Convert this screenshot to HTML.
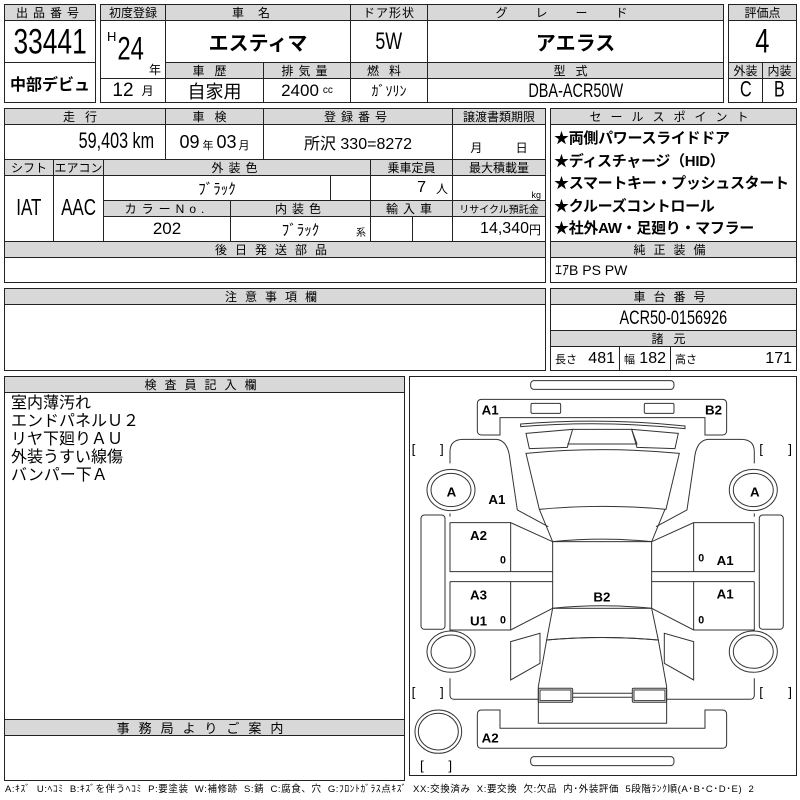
<!DOCTYPE html>
<html><head><meta charset="utf-8"><style>
*{margin:0;padding:0;box-sizing:border-box}
body{width:800px;height:800px;background:#fff;position:relative;overflow:hidden;font-family:"Liberation Sans","Noto Sans CJK JP",sans-serif;color:#000}
.c{position:absolute;border:1px solid #222;display:flex;align-items:center;justify-content:center;white-space:nowrap;font-size:17px}
.h{background:#d8d8d8;font-size:12px;letter-spacing:5px}
.b{font-weight:bold}
.l{justify-content:flex-start;padding-left:4px}
.r{justify-content:flex-end;padding-right:4px}
.n{display:inline-block;transform:scale(0.85,1.15)}
</style></head><body>
<div class="c h" style="left:4px;top:4px;width:92px;height:17px">出品番号</div>
<div class="c" style="left:4px;top:20px;width:92px;height:43px;font-size:31px"><span class="n">33441</span></div>
<div class="c b" style="left:4px;top:62px;width:92px;height:41px;font-size:16px">中部デビュ</div>
<div class="c h" style="left:100px;top:4px;width:66px;height:17px;letter-spacing:0">初度登録</div>
<div class="c h" style="left:165px;top:4px;width:186px;height:17px;letter-spacing:14px">車名</div>
<div class="c h" style="left:350px;top:4px;width:78px;height:17px;letter-spacing:1px">ドア形状</div>
<div class="c h" style="left:427px;top:4px;width:297px;height:17px;letter-spacing:28px">グレード</div>
<div class="c" style="left:100px;top:20px;width:66px;height:59px"><span style="position:absolute;left:6px;top:8px;font-size:13px">H</span><span class="n" style="position:absolute;left:14px;top:12px;font-size:28px">24</span><span style="position:absolute;right:4px;bottom:0;font-size:12px">年</span></div>
<div class="c" style="left:100px;top:78px;width:66px;height:25px;font-size:19px">12 <span style="font-size:12px;margin-left:8px">月</span></div>
<div class="c b" style="left:165px;top:20px;width:186px;height:43px;font-size:20px">エスティマ</div>
<div class="c" style="left:350px;top:20px;width:78px;height:43px;font-size:21px"><span class="n">5W</span></div>
<div class="c b" style="left:427px;top:20px;width:297px;height:43px;font-size:20px">アエラス</div>
<div class="c h" style="left:165px;top:62px;width:99px;height:17px;letter-spacing:10px">車歴</div>
<div class="c h" style="left:263px;top:62px;width:88px;height:17px">排気量</div>
<div class="c h" style="left:350px;top:62px;width:78px;height:17px;letter-spacing:10px">燃料</div>
<div class="c h" style="left:427px;top:62px;width:297px;height:17px;letter-spacing:10px">型式</div>
<div class="c" style="left:165px;top:78px;width:99px;height:25px;font-size:18px">自家用</div>
<div class="c" style="left:263px;top:78px;width:88px;height:25px;font-size:17px">2400 <span style="font-size:10px;margin-left:4px">cc</span></div>
<div class="c" style="left:350px;top:78px;width:78px;height:25px;font-size:14px">ｶﾞｿﾘﾝ</div>
<div class="c" style="left:427px;top:78px;width:297px;height:25px;font-size:17px"><span class="n">DBA-ACR50W</span></div>
<div class="c h" style="left:728px;top:4px;width:69px;height:17px;letter-spacing:0">評価点</div>
<div class="c" style="left:728px;top:20px;width:69px;height:43px;font-size:30px"><span class="n">4</span></div>
<div class="c h" style="left:728px;top:62px;width:35px;height:17px;letter-spacing:0">外装</div>
<div class="c h" style="left:762px;top:62px;width:35px;height:17px;letter-spacing:0">内装</div>
<div class="c" style="left:728px;top:78px;width:35px;height:25px;font-size:19px"><span class="n">C</span></div>
<div class="c" style="left:762px;top:78px;width:35px;height:25px;font-size:19px"><span class="n">B</span></div>
<div class="c h" style="left:4px;top:108px;width:162px;height:17px;letter-spacing:10px">走行</div>
<div class="c h" style="left:165px;top:108px;width:99px;height:17px;letter-spacing:10px">車検</div>
<div class="c h" style="left:263px;top:108px;width:190px;height:17px">登録番号</div>
<div class="c h" style="left:452px;top:108px;width:94px;height:17px;letter-spacing:0">譲渡書類期限</div>
<div class="c r" style="left:4px;top:124px;width:162px;height:36px;font-size:19px"><span class="n">59,403 km</span></div>
<div class="c" style="left:165px;top:124px;width:99px;height:36px;font-size:18px">09<span style="font-size:11px;margin:6px 3px 0">年</span>03<span style="font-size:11px;margin:6px 0 0 2px">月</span></div>
<div class="c" style="left:263px;top:124px;width:190px;height:36px;font-size:16px">所沢 330=8272</div>
<div class="c" style="left:452px;top:124px;width:94px;height:36px;font-size:12px;align-items:flex-end;padding-bottom:3px;word-spacing:30px">月 日</div>
<div class="c h" style="left:4px;top:159px;width:50px;height:17px;letter-spacing:0">シフト</div>
<div class="c h" style="left:53px;top:159px;width:51px;height:17px;letter-spacing:0">エアコン</div>
<div class="c h" style="left:103px;top:159px;width:268px;height:17px">外装色</div>
<div class="c h" style="left:370px;top:159px;width:83px;height:17px;letter-spacing:0">乗車定員</div>
<div class="c h" style="left:452px;top:159px;width:94px;height:17px;letter-spacing:0">最大積載量</div>
<div class="c" style="left:4px;top:175px;width:50px;height:67px;font-size:20px"><span class="n">IAT</span></div>
<div class="c" style="left:53px;top:175px;width:51px;height:67px;font-size:20px"><span class="n">AAC</span></div>
<div class="c" style="left:103px;top:175px;width:228px;height:26px;font-size:15px">ﾌﾞﾗｯｸ</div>
<div class="c" style="left:330px;top:175px;width:41px;height:26px"></div>
<div class="c r" style="left:370px;top:175px;width:83px;height:26px;font-size:16px">7 <span style="font-size:12px;margin-left:10px">人</span></div>
<div class="c r" style="left:452px;top:175px;width:94px;height:26px;font-size:9px;align-items:flex-end">kg</div>
<div class="c h" style="left:103px;top:200px;width:128px;height:17px">カラーNo.</div>
<div class="c h" style="left:230px;top:200px;width:141px;height:17px">内装色</div>
<div class="c h" style="left:370px;top:200px;width:83px;height:17px">輸入車</div>
<div class="c h" style="left:452px;top:200px;width:94px;height:17px;letter-spacing:0;font-size:10px">リサイクル預託金</div>
<div class="c" style="left:103px;top:216px;width:128px;height:26px;font-size:17px">202</div>
<div class="c" style="left:230px;top:216px;width:141px;height:26px;font-size:15px">ﾌﾞﾗｯｸ<span style="position:absolute;right:4px;bottom:2px;font-size:10px">系</span></div>
<div class="c" style="left:370px;top:216px;width:43px;height:26px"></div>
<div class="c" style="left:412px;top:216px;width:41px;height:26px"></div>
<div class="c r" style="left:452px;top:216px;width:94px;height:26px;font-size:16px">14,340<span style="font-size:12px">円</span></div>
<div class="c h" style="left:4px;top:241px;width:542px;height:17px;letter-spacing:8px">後日発送部品</div>
<div class="c" style="left:4px;top:257px;width:542px;height:26px"></div>
<div class="c h" style="left:550px;top:108px;width:247px;height:17px;letter-spacing:9px">セールスポイント</div>
<div class="c" style="left:550px;top:124px;width:247px;height:118px;display:block;padding:3px 0 0 3px;font-size:15px;font-weight:bold;line-height:22.5px;letter-spacing:-0.3px;overflow:hidden">★両側パワースライドドア<br>★ディスチャージ（HID）<br>★スマートキー・プッシュスタート<br>★クルーズコントロール<br>★社外AW・足廻り・マフラー</div>
<div class="c h" style="left:550px;top:241px;width:247px;height:17px;letter-spacing:8px">純正装備</div>
<div class="c l" style="left:550px;top:257px;width:247px;height:26px;font-size:14px">ｴｱB PS PW</div>
<div class="c h" style="left:4px;top:288px;width:542px;height:17px;letter-spacing:8px">注意事項欄</div>
<div class="c" style="left:4px;top:304px;width:542px;height:67px"></div>
<div class="c h" style="left:550px;top:288px;width:247px;height:17px;letter-spacing:8px">車台番号</div>
<div class="c" style="left:550px;top:304px;width:247px;height:27px;font-size:17px"><span class="n">ACR50-0156926</span></div>
<div class="c h" style="left:550px;top:330px;width:247px;height:17px;letter-spacing:10px">諸元</div>
<div class="c" style="left:550px;top:346px;width:70px;height:25px;font-size:16px;justify-content:space-between;padding:0 4px"><span style="font-size:11px">長さ</span>481</div>
<div class="c" style="left:619px;top:346px;width:52px;height:25px;font-size:16px;justify-content:space-between;padding:0 4px"><span style="font-size:11px">幅</span>182</div>
<div class="c" style="left:670px;top:346px;width:127px;height:25px;font-size:16px;justify-content:space-between;padding:0 4px"><span style="font-size:11px">高さ</span>171</div>
<div class="c h" style="left:4px;top:376px;width:401px;height:17px;letter-spacing:8px">検査員記入欄</div>
<div class="c" style="left:4px;top:392px;width:401px;height:328px;display:block;padding:2px 0 0 6px;font-size:16px;line-height:18px">室内薄汚れ<br>エンドパネルＵ２<br>リヤ下廻りＡＵ<br>外装うすい線傷<br>バンパー下Ａ</div>
<div class="c h" style="left:4px;top:719px;width:401px;height:17px;font-size:13px;letter-spacing:9px">事務局よりご案内</div>
<div class="c" style="left:4px;top:735px;width:401px;height:46px"></div>
<div style="position:absolute;left:5px;top:781px;font-size:9.5px;white-space:nowrap;letter-spacing:0.6px;word-spacing:3px">A:ｷｽﾞ U:ﾍｺﾐ B:ｷｽﾞを伴うﾍｺﾐ P:要塗装 W:補修跡 S:錆 C:腐食、穴 G:ﾌﾛﾝﾄｶﾞﾗｽ点ｷｽﾞ XX:交換済み X:要交換 欠:欠品 内･外装評価 5段階ﾗﾝｸ順(A･B･C･D･E) 2</div>
<svg style="position:absolute;left:0;top:0" width="800" height="800">
<rect x="409.5" y="376.5" width="387" height="399" fill="none" stroke="#222"/>
<g transform="translate(400,370) scale(0.3333)" fill="none" stroke="#333" stroke-width="3" font-family="Liberation Sans, sans-serif" font-size="40">
<rect x="392" y="32" width="430" height="26" rx="10"/>
<path d="M245,88 L967,88 Q980,88 980,101 L980,182 Q980,195 967,195 L915,195 L915,143 L300,143 L300,195 L245,195 Q232,195 232,182 L232,101 Q232,88 245,88Z"/>
<rect x="393" y="100" width="89" height="30" rx="4"/>
<rect x="733" y="100" width="89" height="30" rx="4"/>
<path d="M362,170 Q607,150 855,176 L855,168 Q607,142 362,162Z"/>
<path d="M378,190 L518,178 L502,232 L388,236Z"/>
<path d="M835,190 L695,178 L711,232 L825,236Z"/>
<path d="M518,178 L695,178 L711,222 L502,222"/>
<path d="M378,250 Q607,228 838,250 L798,418 Q607,400 418,418Z"/>
<path d="M418,418 L458,515 Q607,500 755,515 L795,418"/>
<rect x="458" y="515" width="297" height="200"/>
<path d="M458,715 Q607,700 755,715 L775,810 Q607,795 440,810Z"/>
<path d="M440,810 Q607,795 775,810 L800,950 L800,1060 L415,1060 L415,950Z"/>
<rect x="415" y="955" width="103" height="42" rx="4"/><rect x="420" y="960" width="93" height="32"/>
<rect x="697" y="955" width="103" height="42" rx="4"/><rect x="702" y="960" width="93" height="32"/>
<path d="M518,970 L697,970 M518,982 L697,982"/>
<path d="M245,1020 L300,1020 L300,1075 L915,1075 L915,1020 L967,1020 Q980,1020 980,1033 L980,1122 Q980,1135 967,1135 L245,1135 Q232,1135 232,1122 L232,1033 Q232,1020 245,1020Z"/>
<rect x="392" y="1160" width="430" height="27" rx="10"/>
<g id="side">
<path d="M150,280 L150,245 Q150,208 190,208 L290,208 Q325,212 330,270 L352,420 L445,470 M150,430 L150,440"/>
<rect x="63" y="435" width="72" height="343" rx="10"/>
<ellipse cx="153" cy="360" rx="72" ry="62"/><ellipse cx="153" cy="360" rx="60" ry="50"/>
<ellipse cx="153" cy="845" rx="72" ry="62"/><ellipse cx="153" cy="845" rx="60" ry="50"/>
<path d="M150,458 L332,458 L458,515 M150,458 L150,605 L458,605 M332,458 L332,605"/>
<path d="M150,635 L458,635 M150,635 L150,780 L332,780 L458,715 M332,635 L332,780"/>
<path d="M332,815 L420,790 L420,880 L332,930Z"/>
<path d="M150,925 L150,975 Q150,988 163,988 L415,988"/>
</g>
<use href="#side" transform="translate(1213,0) scale(-1,1)"/>
<ellipse cx="115" cy="1085" rx="70" ry="65"/><ellipse cx="115" cy="1085" rx="60" ry="55"/>
<g fill="#000" stroke="none" font-weight="bold">
<text x="35" y="250" font-weight="normal">[</text><text x="120" y="250" font-weight="normal">]</text>
<text x="1078" y="250" font-weight="normal">[</text><text x="1165" y="250" font-weight="normal">]</text>
<text x="35" y="980" font-weight="normal">[</text><text x="120" y="980" font-weight="normal">]</text>
<text x="1078" y="980" font-weight="normal">[</text><text x="1165" y="980" font-weight="normal">]</text>
<text x="60" y="1200" font-weight="normal">[</text><text x="145" y="1200" font-weight="normal">]</text>
<text x="245" y="133">A1</text><text x="915" y="133">B2</text>
<text x="140" y="380">A</text><text x="1050" y="380">A</text>
<text x="265" y="402">A1</text>
<text x="210" y="510">A2</text><text x="300" y="580" font-size="32">0</text>
<text x="210" y="688">A3</text><text x="210" y="767">U1</text><text x="300" y="760" font-size="32">0</text>
<text x="580" y="695">B2</text>
<text x="895" y="575" font-size="32">0</text><text x="950" y="585">A1</text>
<text x="950" y="685">A1</text><text x="895" y="760" font-size="32">0</text>
<text x="245" y="1118">A2</text>
</g>
</g>
</svg>
</body></html>
